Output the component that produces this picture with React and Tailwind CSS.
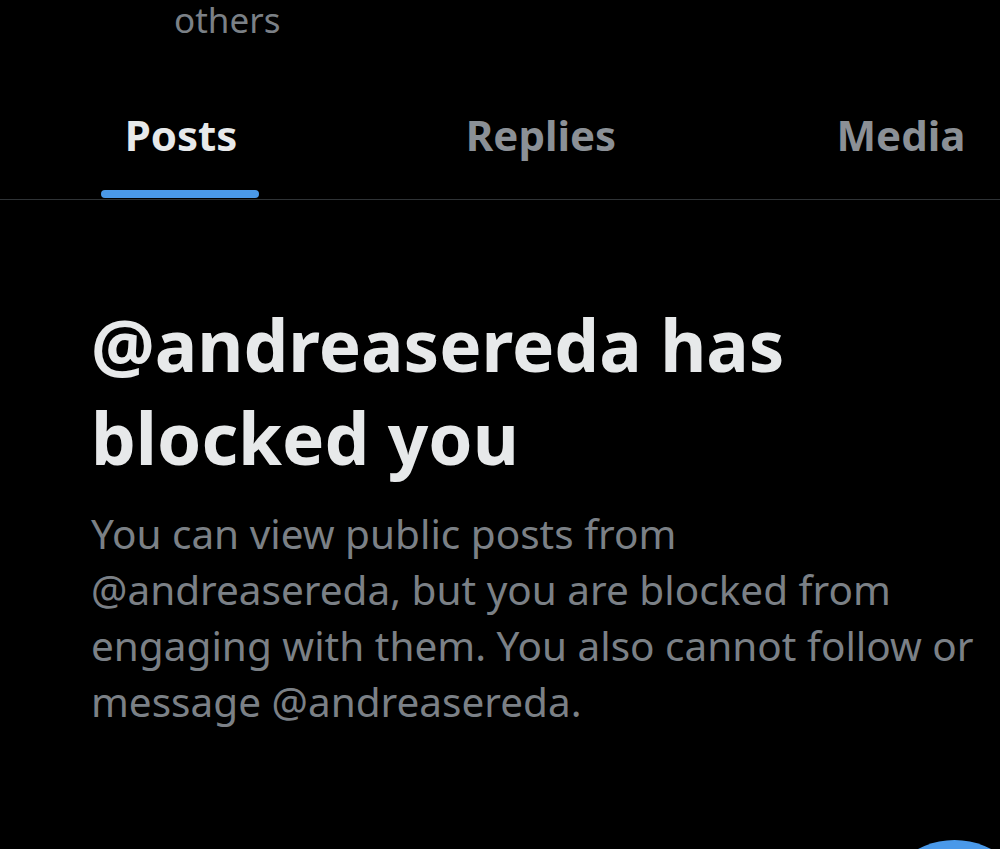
export default function App() {
  const tabs = ["Posts", "Replies", "Media"];

  return (
    <div
      className="relative w-[1000px] h-[849px] overflow-hidden bg-black"
      style={{ fontFamily: '"Noto Sans", "Open Sans", sans-serif' }}
    >
      <p className="h-[40px] pt-[2px] pl-[174px] text-[35px] leading-none text-[#7b8086]">
        others
      </p>

      <div className="flex border-b border-[#2f3336]">
        {tabs.map((tab, i) => (
          <div
            key={tab}
            className={`relative flex h-[159px] w-[360px] shrink-0 items-center justify-center pt-[30px] text-[42px] font-bold ${
              i === 0 ? "ml-px text-[#e7e9ea]" : "text-[#8b9096]"
            }`}
          >
            {tab}
            {i === 0 && (
              <span className="absolute bottom-[1px] left-[100px] h-[8px] w-[158px] rounded-full bg-[#4a99e9]" />
            )}
          </div>
        ))}
      </div>

      <div className="pl-[91px] pt-[98px]">
        <h1 className="text-[71px] font-bold leading-[93px] text-[#e7e9ea]">
          @andreasereda has
          <br />
          blocked you
        </h1>
        <p className="mt-[22px] whitespace-nowrap text-[40.5px] leading-[56px] text-[#7b8086]">
          You can view public posts from
          <br />
          @andreasereda, but you are blocked from
          <br />
          engaging with them. You also cannot follow or
          <br />
          message @andreasereda.
        </p>
      </div>

      <div className="absolute left-[876px] top-[840px] h-[157px] w-[157px] rounded-full bg-[#4a99e9]" />
    </div>
  );
}
